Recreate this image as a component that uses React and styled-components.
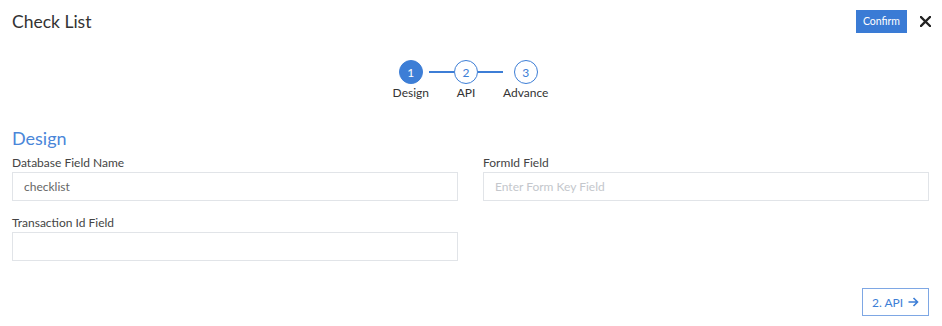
import React from 'react'
import styled, { createGlobalStyle } from 'styled-components'

const GlobalStyle = createGlobalStyle`
  body {
    margin: 0;
    background: #fff;
    font-family: Lato, "Open Sans", sans-serif;
    color: #333;
  }
`

const steps = [
  { n: 1, label: 'Design', active: true },
  { n: 2, label: 'API' },
  { n: 3, label: 'Advance' },
]

function App() {
  return (
    <Modal>
      <GlobalStyle />
      <Header>
        <Title>Check List</Title>
        <Actions>
          <ConfirmButton>Confirm</ConfirmButton>
          <CloseButton aria-label="close">
            <svg width="11" height="11" viewBox="0 0 11 11">
              <path d="M1 1L10 10M10 1L1 10" stroke="#222" strokeWidth="2.3" strokeLinecap="square" />
            </svg>
          </CloseButton>
        </Actions>
      </Header>

      <Stepper>
        {steps.map((s, i) => (
          <React.Fragment key={s.n}>
            {i > 0 && <Connector />}
            <Step>
              <Circle $active={s.active}>{s.n}</Circle>
              <StepLabel>{s.label}</StepLabel>
            </Step>
          </React.Fragment>
        ))}
      </Stepper>

      <SectionTitle>Design</SectionTitle>
      <Fields>
        <Field>
          <Label>Database Field Name</Label>
          <Input defaultValue="checklist" />
        </Field>
        <Field>
          <Label>FormId Field</Label>
          <Input placeholder="Enter Form Key Field" />
        </Field>
        <Field>
          <Label>Transaction Id Field</Label>
          <Input />
        </Field>
      </Fields>

      <Footer>
        <NextButton>
          2. API
          <svg width="11" height="10" viewBox="0 0 11 10">
            <path d="M0.5 5H9.5M5.5 1L9.5 5L5.5 9" stroke="#3d7ed6" strokeWidth="1.6" fill="none" />
          </svg>
        </NextButton>
      </Footer>
    </Modal>
  )
}

export default App

const Modal = styled.div`
  padding: 0 13px 0 12px;
`

const Header = styled.div`
  height: 42px;
  margin-right: -2px;
  display: flex;
  align-items: center;
  justify-content: space-between;
`

const Title = styled.h1`
  margin: 0;
  font-size: 17.5px;
  font-weight: 400;
  color: #333;
`

const Actions = styled.div`
  display: flex;
  align-items: center;
  gap: 13px;
`

const ConfirmButton = styled.button`
  height: 23px;
  padding: 0 7px;
  border: none;
  background: #3a7bd5;
  color: #fff;
  font-family: Lato, sans-serif;
  font-size: 10.5px;
  cursor: pointer;
`

const CloseButton = styled.button`
  border: none;
  background: none;
  padding: 0;
  display: flex;
  cursor: pointer;
`

const Stepper = styled.div`
  margin-top: 18px;
  display: flex;
  justify-content: center;
  align-items: flex-start;
`

const Step = styled.div`
  display: flex;
  flex-direction: column;
  align-items: center;
  min-width: 24px;
`

const Circle = styled.div`
  width: 24px;
  height: 24px;
  box-sizing: border-box;
  border-radius: 50%;
  display: flex;
  align-items: center;
  justify-content: center;
  font-size: 12px;
  border: 1.5px solid #3d7ed6;
  background: ${p => (p.$active ? '#3d7ed6' : '#fff')};
  color: ${p => (p.$active ? '#fff' : '#3d7ed6')};
`

const StepLabel = styled.div`
  margin-top: 1px;
  font-size: 12px;
  line-height: 16px;
  color: #333;
`

const Connector = styled.div`
  width: 25px;
  height: 2px;
  margin-top: 11px;
  background: #3d7ed6;
`

const SectionTitle = styled.h2`
  margin: 25px 0 0;
  font-size: 18px;
  line-height: 24px;
  font-weight: 400;
  color: #4a86d9;
`

const Fields = styled.div`
  margin-top: 5px;
  display: grid;
  grid-template-columns: 1fr 1fr;
  column-gap: 25px;
  row-gap: 14px;
`

const Field = styled.div`
  display: flex;
  flex-direction: column;
`

const Label = styled.label`
  font-size: 12px;
  line-height: 16px;
  margin-bottom: 1px;
  color: #444;
`

const Input = styled.input`
  box-sizing: border-box;
  height: 29px;
  border: 1px solid #e1e4e8;
  padding: 0 11px;
  font-family: Lato, sans-serif;
  font-size: 12px;
  color: #666;
  outline: none;

  &::placeholder {
    color: #c4c7cc;
  }
`

const Footer = styled.div`
  margin-top: 27px;
  display: flex;
  justify-content: flex-end;
`

const NextButton = styled.button`
  height: 28px;
  width: 67px;
  display: flex;
  align-items: center;
  justify-content: center;
  gap: 5px;
  background: #fff;
  border: 1px solid #7ea7e4;
  color: #3d7ed6;
  font-family: Lato, sans-serif;
  font-size: 12px;
  cursor: pointer;
`
